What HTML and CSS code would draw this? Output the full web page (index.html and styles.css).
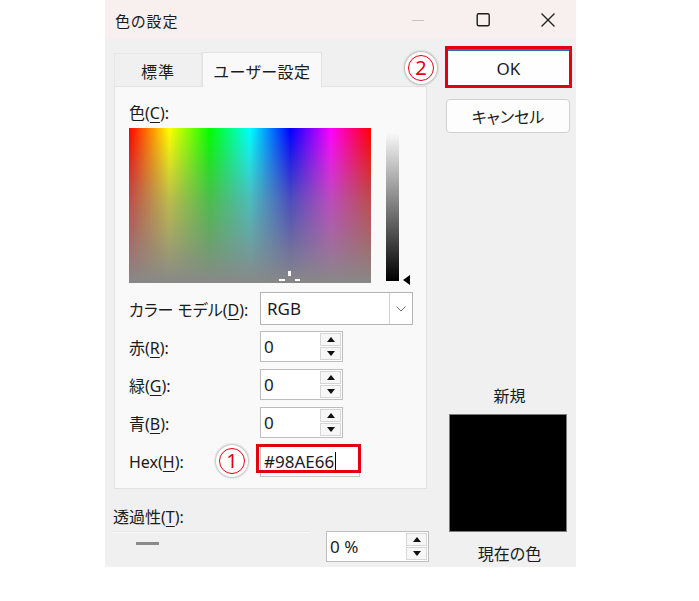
FILE: index.html
```html
<!DOCTYPE html>
<html lang="ja">
<head>
<meta charset="utf-8">
<title>色の設定</title>
<link rel="stylesheet" href="styles.css">
</head>
<body>
<div class="dialog">
  <div class="titlebar">
    <span class="title">色の設定</span>
    <div class="controls">
      <span class="ctl"><svg width="20" height="20" viewBox="0 0 20 20"><line x1="4" y1="10.5" x2="16" y2="10.5" stroke="#c4c4c4" stroke-width="1"/></svg></span>
      <span class="ctl"><svg width="20" height="20" viewBox="0 0 20 20"><rect x="4.2" y="3.7" width="12" height="12" rx="1.5" fill="none" stroke="#1c1c1c" stroke-width="1.4"/></svg></span>
      <span class="ctl"><svg width="20" height="20" viewBox="0 0 20 20"><path d="M3.5 3.5 L16.5 16.5 M16.5 3.5 L3.5 16.5" stroke="#1c1c1c" stroke-width="1.3" fill="none"/></svg></span>
    </div>
  </div>
  <div class="content">
    <div class="left">
      <div class="tabs">
        <div class="tab">標準</div>
        <div class="tab active">ユーザー設定</div>
      </div>
      <div class="pane">
        <div class="lbl first">色(<u>C</u>):</div>
        <div class="picker">
          <div class="spectrum">
            <span class="mk tick"></span>
            <span class="mk dl"></span>
            <span class="mk dr"></span>
          </div>
          <div class="lum"></div>
          <div class="arrow"></div>
        </div>
        <div class="row r-model">
          <span class="rl">カラー モデル(<u>D</u>):</span>
          <div class="select">
            <span class="sv">RGB</span>
            <span class="dd"><svg width="12" height="8" viewBox="0 0 12 8"><path d="M1.5 1.5 L6 6 L10.5 1.5" fill="none" stroke="#777" stroke-width="1"/></svg></span>
          </div>
        </div>
        <div class="row r-red">
          <span class="rl">赤(<u>R</u>):</span>
          <div class="spin"><span class="sv">0</span><div class="btns"><span class="sb"><i class="up"></i></span><span class="sb"><i class="down"></i></span></div></div>
        </div>
        <div class="row r-green">
          <span class="rl">緑(<u>G</u>):</span>
          <div class="spin"><span class="sv">0</span><div class="btns"><span class="sb"><i class="up"></i></span><span class="sb"><i class="down"></i></span></div></div>
        </div>
        <div class="row r-blue">
          <span class="rl">青(<u>B</u>):</span>
          <div class="spin"><span class="sv">0</span><div class="btns"><span class="sb"><i class="up"></i></span><span class="sb"><i class="down"></i></span></div></div>
        </div>
        <div class="row r-hex">
          <span class="rl">Hex(<u>H</u>):</span>
          <div class="hexbox">
            <span class="sv">#98AE66</span><span class="caret"></span>
            <span class="hl-hex"></span>
            <span class="badge b1"><span class="bi">1</span></span>
          </div>
        </div>
      </div>
      <div class="lbl trans">透過性(<u>T</u>):</div>
      <div class="trans-row">
        <div class="slider"><span class="thumb"></span></div>
        <div class="spin wide"><span class="sv">0 %</span><div class="btns"><span class="sb"><i class="up"></i></span><span class="sb"><i class="down"></i></span></div></div>
      </div>
    </div>
    <div class="right">
      <div class="ok-wrap">
        <button class="btn ok">OK</button>
        <span class="badge b2"><span class="bi">2</span></span>
      </div>
      <button class="btn cancel">キャンセル</button>
      <div class="cap new">新規</div>
      <div class="swatch"></div>
      <div class="cap cur">現在の色</div>
    </div>
  </div>
</div>
</body>
</html>
```

FILE: styles.css
```css
* { box-sizing: border-box; }
html, body { margin: 0; padding: 0; background: #ffffff; }
body {
  font-family: "Noto Sans", "Noto Sans CJK JP", sans-serif;
  font-size: 16px;
  color: #1b1b1b;
  font-feature-settings: "palt" 1;
}
.dialog {
  margin-left: 105px;
  width: 471px;
  height: 567px;
  background: #f0f0f0;
  display: flex;
  flex-direction: column;
  position: relative;
}
.titlebar {
  height: 39px;
  background: #f8f0ee;
  display: flex;
  align-items: center;
  padding-left: 10px;
  padding-right: 18px;
}
.title { font-size: 15px; flex: 1; padding-top: 1px; letter-spacing: 1px; }
.controls { display: flex; gap: 45px; }
.ctl { width: 20px; height: 20px; display: block; }
.ctl svg { display: block; }

.content { display: flex; flex: 1; padding-left: 9px; }
.left { width: 313px; padding-top: 13px; display: flex; flex-direction: column; }
.tabs { display: flex; align-items: flex-end; height: 34px; }
.tab {
  width: 88px;
  height: 33px;
  display: flex;
  align-items: center;
  justify-content: center;
  border: 1px solid #e6e6e6;
  border-bottom: none;
  background: #f0f0f0;
  padding-top: 1px;
  letter-spacing: 1px;
}
.tab.active {
  width: 120px;
  height: 35px;
  background: #f9f9f9;
  border-color: #e2e2e2;
  margin-bottom: -1px;
  position: relative;
  z-index: 1;
  letter-spacing: 0.5px;
}
.pane {
  height: 403px;
  background: #f9f9f9;
  border: 1px solid #e2e2e2;
  padding-left: 14px;
  display: flex;
  flex-direction: column;
}
.lbl { height: 22px; line-height: 22px; white-space: nowrap; }
.lbl.first { margin-top: 15px; }
u { text-decoration: underline; text-underline-offset: 3px; text-decoration-thickness: 1px; }

.picker { display: flex; margin-top: 4px; height: 155px; }
.spectrum {
  width: 242px;
  height: 155px;
  position: relative;
  background:
    linear-gradient(to bottom, rgba(136,136,136,0) 0%, rgba(136,136,136,0.55) 45%, #888888 100%),
    linear-gradient(to right, #ff0000 0%, #ffff00 16.67%, #00ff00 33.33%, #00ffff 50%, #0000ff 66.67%, #ff00ff 83.33%, #ff0000 100%);
}
.mk { position: absolute; background: #ffffff; display: block; }
.mk.tick { left: 159px; top: 143px; width: 3px; height: 5px; }
.mk.dl { left: 150px; top: 151px; width: 6px; height: 2px; }
.mk.dr { left: 166px; top: 151px; width: 5px; height: 2px; }
.lum {
  width: 13px;
  height: 149px;
  margin-left: 15px;
  margin-top: 4px;
  background: linear-gradient(to bottom, #fafafa 0%, #000000 100%);
}
.arrow {
  align-self: flex-end;
  margin-left: 4px;
  margin-bottom: -2px;
  width: 0;
  height: 0;
  border-right: 7px solid #000;
  border-top: 5px solid transparent;
  border-bottom: 5px solid transparent;
}

.row { display: flex; align-items: center; }
.rl { width: 131px; white-space: nowrap; }
.r-model { margin-top: 9px; height: 33px; }
.r-red { margin-top: 6px; height: 31px; }
.r-green, .r-blue { margin-top: 7px; height: 31px; }
.r-hex { margin-top: 8px; height: 31px; }

.sv { font-size: 17px; }
.select {
  width: 153px;
  height: 33px;
  background: #fff;
  border: 1px solid #b4b4b4;
  display: flex;
  align-items: center;
}
.select .sv { flex: 1; padding-left: 6px; }
.dd {
  width: 23px;
  height: 100%;
  border-left: 1px solid #d2d2d2;
  display: flex;
  align-items: center;
  justify-content: center;
}
.dd svg { display: block; }

.spin {
  width: 83px;
  height: 31px;
  background: #fff;
  border: 1px solid #bdbdbd;
  display: flex;
  align-items: center;
}
.spin .sv { flex: 1; padding-left: 3px; }
.spin.wide { width: 103px; flex-shrink: 0; margin-left: 16px; }
.btns {
  width: 22px;
  height: 100%;
  display: flex;
  flex-direction: column;
  gap: 1px;
  padding: 1px 1px 1px 0;
}
.sb {
  flex: 1;
  background: #f7f7f7;
  border: 1px solid #d6d6d6;
  display: flex;
  align-items: center;
  justify-content: center;
}
.sb i { display: block; width: 0; height: 0; border-left: 4px solid transparent; border-right: 4px solid transparent; }
.sb i.up { border-bottom: 5px solid #111; }
.sb i.down { border-top: 5px solid #111; }

.hexbox {
  width: 100px;
  height: 31px;
  background: #fff;
  border: 1px solid #c4c4c4;
  display: flex;
  align-items: center;
  position: relative;
}
.hexbox .sv { padding-left: 3px; }
.caret { width: 1px; height: 20px; background: #000; margin-left: 1px; }
.hl-hex {
  position: absolute;
  left: -5px;
  top: -3px;
  width: 105px;
  height: 29px;
  border: 3px solid #e3000f;
}

.badge {
  position: absolute;
  width: 32px;
  height: 32px;
  border-radius: 50%;
  background: #fff;
  box-shadow: 0 0 2px 1px rgba(0,0,0,0.25);
  display: flex;
  align-items: center;
  justify-content: center;
}
.bi {
  width: 26px;
  height: 26px;
  border: 1.5px solid #e3000f;
  border-radius: 50%;
  color: #e3000f;
  font-size: 20px;
  line-height: 23px;
  text-align: center;
}
.b1 { left: -45px; top: -2px; }
.b2 { left: -43px; top: 3px; }

.lbl.trans { margin-top: 17px; margin-left: -1px; }
.trans-row { display: flex; margin-top: 3px; height: 31px; }
.slider {
  width: 197px;
  flex-shrink: 0;
  margin-left: -1px;
  margin-top: 1px;
  border-top: 1px solid #fbfbfb;
  box-shadow: 0 -1px 0 #e6e6e6;
}
.thumb { display: block; width: 23px; height: 3px; background: #8a8a8a; margin-top: 9px; margin-left: 23px; }

.right { width: 127px; margin-left: 18px; padding-top: 7px; display: flex; flex-direction: column; }
.ok-wrap {
  position: relative;
  height: 42px;
  border: 3px solid #e3000f;
  display: flex;
}
.btn {
  font-family: "Noto Sans", "Noto Sans CJK JP", sans-serif;
  font-feature-settings: "palt" 1;
  font-size: 16px;
  color: #1b1b1b;
  background: #fdfdfd;
  border: 1px solid #d0d0d0;
  border-radius: 4px;
  padding: 0;
}
.ok {
  flex: 1;
  border: none;
  border-top: 2px solid #2f6fc6;
  border-radius: 0;
  background: #fefefe;
  font-size: 17px;
}
.cancel { margin-top: 11px; margin-left: 1px; width: 124px; height: 34px; }
.cap { text-align: center; height: 22px; line-height: 22px; padding-left: 2px; }
.cap.new { margin-top: 252px; }
.swatch { margin-top: 7px; margin-left: 4px; width: 118px; height: 118px; background: #000; border: 1px solid #7a7a7a; }
.cap.cur { margin-top: 11px; }
```
